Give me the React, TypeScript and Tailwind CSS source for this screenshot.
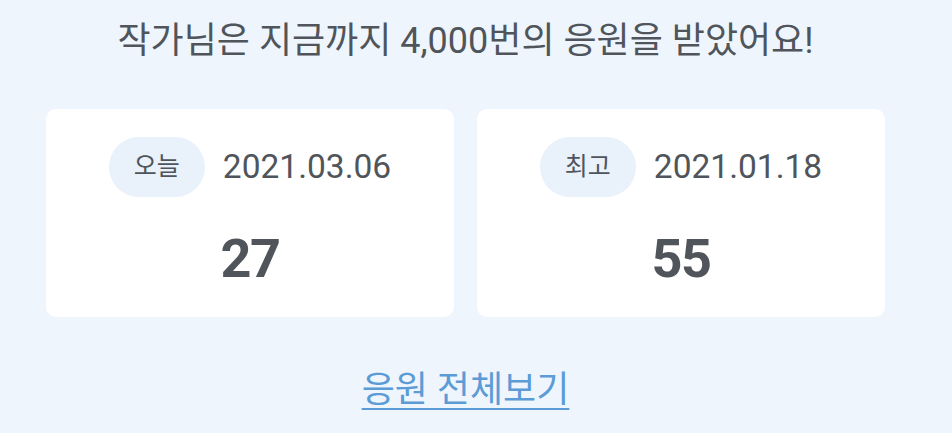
import React from "react";

const font = { fontFamily: 'Roboto, "Noto Sans CJK KR", sans-serif' };

function Card({ label, date, value }: { label: string; date: string; value: string }) {
  return (
    <div className="w-[408px] h-[208px] bg-white rounded-[10px] flex flex-col items-center pt-[28px]">
      <div className="flex items-center gap-[18px]">
        <div className="w-[96px] h-[60px] rounded-full bg-[#e9f1fa] flex items-center justify-center text-[25px] text-[#50555c]">
          {label}
        </div>
        <div className="text-[33.5px] text-[#50555c]">{date}</div>
      </div>
      <div className="mt-[35px] text-[54px] font-bold text-[#50555c] leading-none tracking-[-1.5px]">{value}</div>
    </div>
  );
}

export default function App() {
  return (
    <div className="w-[952px] h-[433px] bg-[#eff5fd] flex flex-col items-center overflow-hidden pr-[21px]" style={font}>
      <div className="mt-[16px] text-[36px] text-[#50555c] leading-[50px]">
        작가님은 지금까지 4,000번의 응원을 받았어요!
      </div>
      <div className="mt-[43px] flex gap-[23px]">
        <Card label="오늘" date="2021.03.06" value="27" />
        <Card label="최고" date="2021.01.18" value="55" />
      </div>
      <a className="mt-[49px] text-[36px] text-[#5b9bd6] underline underline-offset-[6px] decoration-[2px] leading-[48px]">
        응원 전체보기
      </a>
    </div>
  );
}
